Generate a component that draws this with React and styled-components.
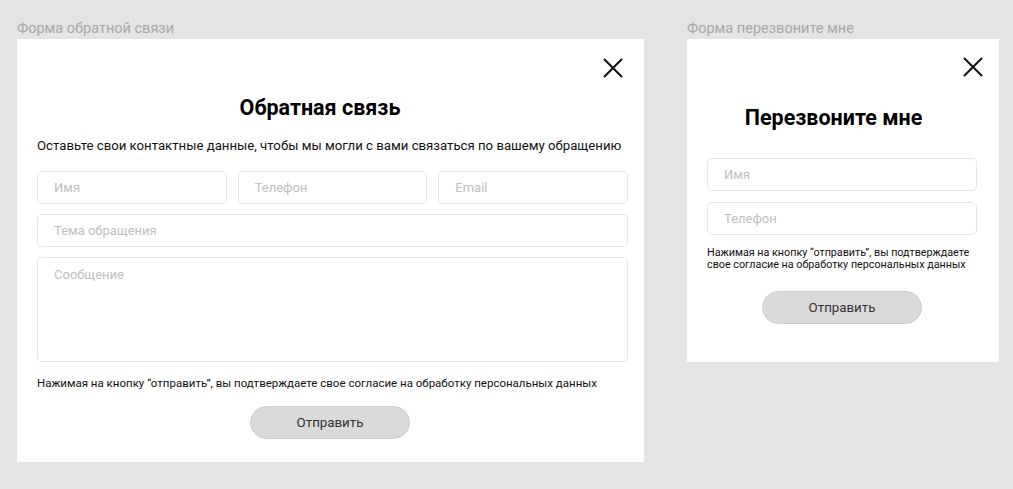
import React from "react";
import styled, { createGlobalStyle } from "styled-components";

const GlobalStyle = createGlobalStyle`
  body {
    margin: 0;
    background: #e4e4e4;
    font-family: Roboto, "Noto Sans", Arial, sans-serif;
  }
`;

function CloseIcon() {
  return (
    <svg width="20" height="20" viewBox="0 0 20 20">
      <path d="M1 1L19 19M19 1L1 19" stroke="#111" strokeWidth="2" fill="none" />
    </svg>
  );
}

export default function App() {
  return (
    <>
      <GlobalStyle />
      <Page>
        <Frame>
          <FrameLabel>Форма обратной связи</FrameLabel>
          <FeedbackCard>
            <Close $top={19} $right={21}>
              <CloseIcon />
            </Close>
            <Title $top={57} $shift={25}>
              Обратная связь
            </Title>
            <Lead>
              Оставьте свои контактные данные, чтобы мы могли с вами связаться по
              вашему обращению
            </Lead>
            <Fields $top={17} $gap={10}>
              <Row>
                <Field placeholder="Имя" />
                <Field placeholder="Телефон" />
                <Field placeholder="Email" />
              </Row>
              <Field placeholder="Тема обращения" />
              <Message placeholder="Сообщение" />
            </Fields>
            <Consent $top={15} $size={11.5} $line={13}>
              Нажимая на кнопку “отправить”, вы подтверждаете свое согласие на
              обработку персональных данных
            </Consent>
            <Submit $top={16} $shift={5}>
              Отправить
            </Submit>
          </FeedbackCard>
        </Frame>

        <Frame>
          <FrameLabel>Форма перезвоните мне</FrameLabel>
          <CallbackCard>
            <Close $top={18} $right={16}>
              <CloseIcon />
            </Close>
            <Title $top={67} $shift={17}>
              Перезвоните мне
            </Title>
            <Fields $top={28} $gap={11}>
              <Field placeholder="Имя" />
              <Field placeholder="Телефон" />
            </Fields>
            <Consent $top={12} $size={10.75} $line={12}>
              Нажимая на кнопку “отправить”, вы подтверждаете свое согласие на
              обработку персональных данных
            </Consent>
            <Submit $top={20}>Отправить</Submit>
          </CallbackCard>
        </Frame>
      </Page>
    </>
  );
}

const Page = styled.div`
  display: flex;
  align-items: flex-start;
  gap: 43px;
  padding: 20px 0 0 17px;
`;

const Frame = styled.div`
  display: flex;
  flex-direction: column;
`;

const FrameLabel = styled.div`
  font-size: 14.5px;
  line-height: 18px;
  color: #a9a9a9;
  margin-bottom: 1px;
`;

const Card = styled.div`
  position: relative;
  box-sizing: border-box;
  background: #fff;
  display: flex;
  flex-direction: column;
`;

const FeedbackCard = styled(Card)`
  width: 627px;
  height: 423px;
  padding: 0 16px 0 20px;
`;

const CallbackCard = styled(Card)`
  width: 312px;
  height: 323px;
  padding: 0 22px 0 20px;
`;

const Close = styled.button`
  position: absolute;
  top: ${(p) => p.$top}px;
  right: ${(p) => p.$right}px;
  width: 20px;
  height: 20px;
  padding: 0;
  border: 0;
  background: none;
  display: flex;
  cursor: pointer;
`;

const Title = styled.h2`
  margin: ${(p) => p.$top}px 0 0;
  padding-right: ${(p) => p.$shift || 0}px;
  font-size: 21.5px;
  line-height: 24px;
  font-weight: 700;
  color: #000;
  text-align: center;
`;

const Lead = styled.p`
  margin: 18px 0 0;
  font-size: 13.2px;
  line-height: 16px;
  color: #111;
  white-space: nowrap;
`;

const Fields = styled.div`
  display: flex;
  flex-direction: column;
  gap: ${(p) => p.$gap}px;
  margin-top: ${(p) => p.$top}px;
`;

const Row = styled.div`
  display: grid;
  grid-template-columns: repeat(3, 1fr);
  gap: 11px;
`;

const fieldStyles = `
  box-sizing: border-box;
  width: 100%;
  border: 1px solid #e6e6e6;
  border-radius: 5px;
  padding: 0 16px;
  font-family: Roboto, "Noto Sans", Arial, sans-serif;
  font-size: 13px;
  color: #333;
  background: #fff;
  outline: none;
  &::placeholder {
    color: #c0c0c0;
  }
`;

const Field = styled.input`
  ${fieldStyles}
  height: 33px;
`;

const Message = styled.textarea`
  ${fieldStyles}
  height: 105px;
  padding-top: 9px;
  resize: none;
`;

const Consent = styled.p`
  margin: ${(p) => p.$top}px 0 0;
  font-size: ${(p) => p.$size}px;
  line-height: ${(p) => p.$line}px;
  color: #111;
`;

const Submit = styled.button`
  align-self: center;
  margin-top: ${(p) => p.$top}px;
  margin-right: ${(p) => p.$shift || 0}px;
  width: 160px;
  height: 33px;
  border: 1px solid #cdcdcd;
  border-radius: 17px;
  background: #dadada;
  font-family: Roboto, "Noto Sans", Arial, sans-serif;
  font-size: 13.3px;
  color: #333;
  cursor: pointer;
`;
